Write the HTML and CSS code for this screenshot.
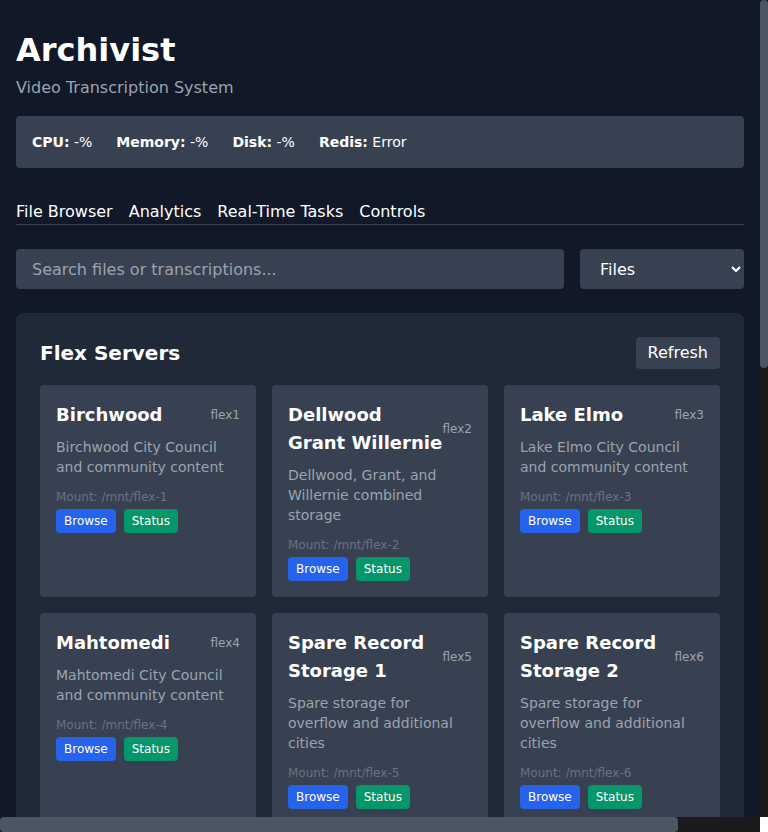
FILE: index.html
```html
<!DOCTYPE html>
<html lang="en">
<head>
<meta charset="utf-8">
<title>Archivist</title>
<link rel="stylesheet" href="styles.css">
</head>
<body>
<div class="window">
<div class="viewport">
<div class="app">
  <header class="header">
    <h1 class="title">Archivist</h1>
    <p class="subtitle">Video Transcription System</p>
  </header>

  <div class="stats">
    <span class="stat"><b>CPU:</b> -%</span>
    <span class="stat"><b>Memory:</b> -%</span>
    <span class="stat"><b>Disk:</b> -%</span>
    <span class="stat"><b>Redis:</b> Error</span>
  </div>

  <nav class="tabs">
    <span class="tab">File Browser</span>
    <span class="tab">Analytics</span>
    <span class="tab">Real-Time Tasks</span>
    <span class="tab">Controls</span>
  </nav>

  <div class="search-row">
    <input class="search" type="text" placeholder="Search files or transcriptions...">
    <select class="select">
      <option>Files</option>
      <option>Transcriptions</option>
    </select>
  </div>

  <section class="panel">
    <div class="panel-head">
      <h2 class="panel-title">Flex Servers</h2>
      <button class="btn-refresh">Refresh</button>
    </div>
    <div class="grid">
      <div class="card">
        <div class="card-head"><span class="card-title">Birchwood</span><span class="card-id">flex1</span></div>
        <p class="card-desc">Birchwood City Council and community content</p>
        <p class="card-mount">Mount: /mnt/flex-1</p>
        <div class="card-actions"><button class="btn btn-blue">Browse</button><button class="btn btn-green">Status</button></div>
      </div>
      <div class="card">
        <div class="card-head"><span class="card-title">Dellwood Grant Willernie</span><span class="card-id">flex2</span></div>
        <p class="card-desc">Dellwood, Grant, and Willernie combined storage</p>
        <p class="card-mount">Mount: /mnt/flex-2</p>
        <div class="card-actions"><button class="btn btn-blue">Browse</button><button class="btn btn-green">Status</button></div>
      </div>
      <div class="card">
        <div class="card-head"><span class="card-title">Lake Elmo</span><span class="card-id">flex3</span></div>
        <p class="card-desc">Lake Elmo City Council and community content</p>
        <p class="card-mount">Mount: /mnt/flex-3</p>
        <div class="card-actions"><button class="btn btn-blue">Browse</button><button class="btn btn-green">Status</button></div>
      </div>
      <div class="card">
        <div class="card-head"><span class="card-title">Mahtomedi</span><span class="card-id">flex4</span></div>
        <p class="card-desc">Mahtomedi City Council and community content</p>
        <p class="card-mount">Mount: /mnt/flex-4</p>
        <div class="card-actions"><button class="btn btn-blue">Browse</button><button class="btn btn-green">Status</button></div>
      </div>
      <div class="card">
        <div class="card-head"><span class="card-title">Spare Record Storage 1</span><span class="card-id">flex5</span></div>
        <p class="card-desc">Spare storage for overflow and additional cities</p>
        <p class="card-mount">Mount: /mnt/flex-5</p>
        <div class="card-actions"><button class="btn btn-blue">Browse</button><button class="btn btn-green">Status</button></div>
      </div>
      <div class="card">
        <div class="card-head"><span class="card-title">Spare Record Storage 2</span><span class="card-id">flex6</span></div>
        <p class="card-desc">Spare storage for overflow and additional cities</p>
        <p class="card-mount">Mount: /mnt/flex-6</p>
        <div class="card-actions"><button class="btn btn-blue">Browse</button><button class="btn btn-green">Status</button></div>
      </div>
    </div>
  </section>
</div>
</div>
<div class="vtrack"><div class="vthumb"></div></div>
<div class="htrack"><div class="hthumb"></div></div>
<div class="corner"></div>
</div>
</body>
</html>
```

FILE: styles.css
```css
html, body {
  margin: 0;
  padding: 0;
  height: 100%;
  overflow: hidden;
}

body {
  background: #111827;
  color: #ffffff;
  font-family: "DejaVu Sans", sans-serif;
}

.window {
  display: grid;
  grid-template-columns: 760px 8px;
  grid-template-rows: 817px 15px;
  height: 100vh;
}

.viewport {
  overflow: hidden;
  min-width: 0;
  min-height: 0;
}

.vtrack {
  background: #1b1b1b;
}

.vthumb {
  height: 368px;
  background: #4b5563;
  border-radius: 4px;
}

.htrack {
  background: #1b1b1b;
}

.hthumb {
  width: 678px;
  height: 15px;
  background: #4b5563;
  border-radius: 4px;
}

.corner {
  background: #ffffff;
}

.app {
  padding: 0 16px 16px;
}

.header {
  padding-top: 30px;
}

.title {
  margin: 0;
  font-size: 32px;
  line-height: 40px;
  font-weight: bold;
}

.subtitle {
  margin: 6px 0 0;
  font-size: 16px;
  line-height: 24px;
  color: #9ca3af;
}

.stats {
  margin-top: 16px;
  background: #374151;
  border-radius: 4px;
  padding: 16px;
  display: flex;
  gap: 24px;
  font-size: 14px;
  line-height: 20px;
}

.tabs {
  margin-top: 32px;
  display: flex;
  gap: 16px;
  border-bottom: 1px solid #374151;
  font-size: 16px;
  line-height: 24px;
}

.search-row {
  margin-top: 24px;
  display: flex;
  gap: 16px;
}

.search {
  flex: 1;
  height: 40px;
  box-sizing: border-box;
  background: #374151;
  border: none;
  border-radius: 4px;
  padding: 8px 16px;
  color: #ffffff;
  font-family: "DejaVu Sans", sans-serif;
  font-size: 16px;
  outline: none;
}

.search::placeholder {
  color: #9ca3af;
}

.select {
  width: 164px;
  height: 40px;
  box-sizing: border-box;
  background: #374151;
  border: none;
  border-radius: 4px;
  padding: 8px 16px;
  color: #ffffff;
  font-family: "DejaVu Sans", sans-serif;
  font-size: 16px;
}

.panel {
  margin-top: 24px;
  background: #1f2937;
  border-radius: 8px;
  padding: 24px;
}

.panel-head {
  display: flex;
  justify-content: space-between;
  align-items: center;
  min-height: 32px;
  margin-bottom: 16px;
}

.panel-title {
  margin: 0;
  font-size: 20px;
  line-height: 28px;
  font-weight: bold;
}

.btn-refresh {
  background: #374151;
  color: #ffffff;
  border: none;
  border-radius: 4px;
  padding: 4px 12px;
  font-family: "DejaVu Sans", sans-serif;
  font-size: 16px;
  line-height: 24px;
}

.grid {
  display: grid;
  grid-template-columns: repeat(3, 1fr);
  gap: 16px;
}

.card {
  background: #374151;
  border-radius: 4px;
  padding: 16px;
}

.card-head {
  display: flex;
  justify-content: space-between;
  align-items: center;
}

.card-title {
  font-size: 18px;
  line-height: 28px;
  font-weight: bold;
}

.card-id {
  font-size: 12px;
  line-height: 16px;
  color: #9ca3af;
}

.card-desc {
  margin: 8px 0 0;
  font-size: 14px;
  line-height: 20px;
  color: #9ca3af;
}

.card-mount {
  margin: 12px 0 0;
  font-size: 12px;
  line-height: 16px;
  color: #6b7280;
}

.card-actions {
  margin-top: 4px;
  display: flex;
  gap: 8px;
}

.btn {
  border: none;
  border-radius: 4px;
  padding: 4px 8px;
  color: #ffffff;
  font-family: "DejaVu Sans", sans-serif;
  font-size: 12px;
  line-height: 16px;
}

.btn-blue { background: #2563eb; }
.btn-green { background: #059669; }
```
